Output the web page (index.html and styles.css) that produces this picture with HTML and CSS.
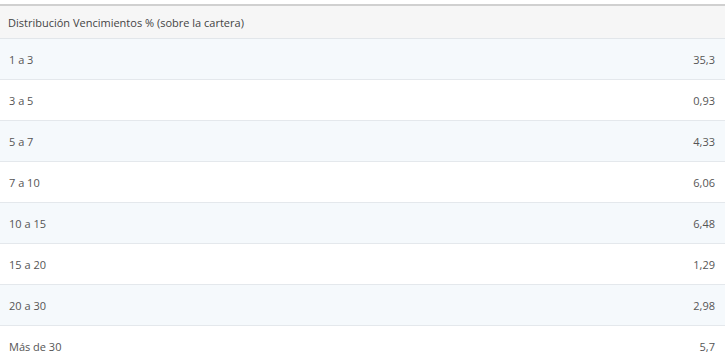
FILE: index.html
```html
<!DOCTYPE html>
<html lang="es">
<head>
<meta charset="utf-8">
<link rel="stylesheet" href="styles.css">
</head>
<body>
<table class="tbl">
  <thead>
    <tr><th colspan="2">Distribución Vencimientos % (sobre la cartera)</th></tr>
  </thead>
  <tbody>
    <tr><td>1 a 3</td><td class="num">35,3</td></tr>
    <tr><td>3 a 5</td><td class="num">0,93</td></tr>
    <tr><td>5 a 7</td><td class="num">4,33</td></tr>
    <tr><td>7 a 10</td><td class="num">6,06</td></tr>
    <tr><td>10 a 15</td><td class="num">6,48</td></tr>
    <tr><td>15 a 20</td><td class="num">1,29</td></tr>
    <tr><td>20 a 30</td><td class="num">2,98</td></tr>
    <tr><td>Más de 30</td><td class="num">5,7</td></tr>
  </tbody>
</table>
</body>
</html>
```
FILE: styles.css
```css
html, body { margin: 0; padding: 0; background: #fff; }
body { padding-top: 4px; font-family: "Open Sans", "DejaVu Sans", sans-serif; font-size: 11px; color: #555; }
.tbl { width: 100%; border-collapse: collapse; border-top: 2px solid #d0d0d0; }
.tbl th { text-align: left; font-weight: normal; background: #f6f6f6; height: 32px; padding: 0 8px; border-bottom: 1px solid #e2e6ea; color: #444; }
.tbl td { height: 40px; padding: 0 9px; border-bottom: 1px solid #e4e8ec; }
.tbl td.num { text-align: right; padding-right: 10px; }
.tbl tbody tr:nth-child(odd) td { background: #f5f9fc; }
```
